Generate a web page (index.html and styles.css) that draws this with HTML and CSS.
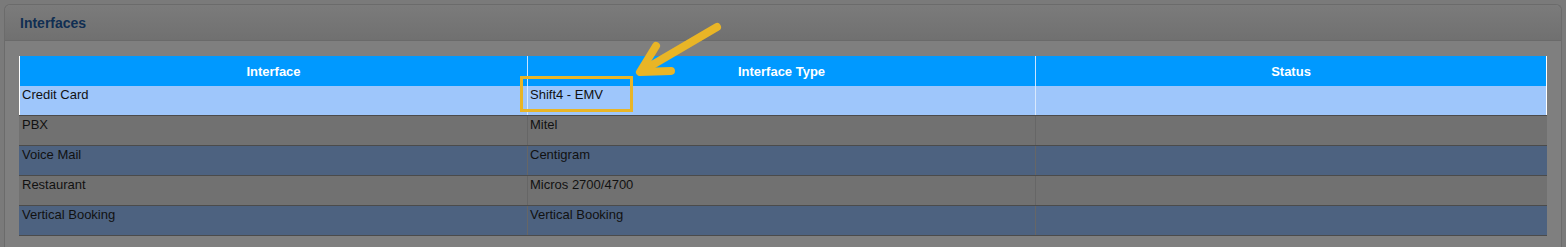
FILE: index.html
```html
<!DOCTYPE html>
<html lang="en">
<head>
    <meta charset="UTF-8">
    <title>Interfaces</title>
    <link rel="stylesheet" href="styles.css">
</head>
<body>
    <div class="panel">
        <div class="panel-head">
            <h2>Interfaces</h2>
        </div>
        <div class="panel-body">
            <table class="grid">
                <colgroup>
                    <col class="col-name">
                    <col class="col-type">
                    <col>
                </colgroup>
                <thead>
                    <tr>
                        <th>Interface</th>
                        <th>Interface Type</th>
                        <th>Status</th>
                    </tr>
                </thead>
                <tbody>
                    <tr class="selected">
                        <td>Credit Card</td>
                        <td>Shift4 - EMV</td>
                        <td></td>
                    </tr>
                    <tr>
                        <td>PBX</td>
                        <td>Mitel</td>
                        <td></td>
                    </tr>
                    <tr class="alt">
                        <td>Voice Mail</td>
                        <td>Centigram</td>
                        <td></td>
                    </tr>
                    <tr>
                        <td>Restaurant</td>
                        <td>Micros 2700/4700</td>
                        <td></td>
                    </tr>
                    <tr class="alt">
                        <td>Vertical Booking</td>
                        <td>Vertical Booking</td>
                        <td></td>
                    </tr>
                </tbody>
            </table>
        </div>
    </div>

    <!-- callout marking the EMV interface type -->
    <svg class="callout" width="1566" height="247" viewBox="0 0 1566 247">
        <rect x="521.5" y="77.5" width="110" height="33" fill="none" stroke="#e9b526" stroke-width="3"/>
        <g fill="none" stroke="#e9b526" stroke-width="8" stroke-linecap="round" stroke-linejoin="round">
            <line x1="717" y1="27" x2="642" y2="71"/>
            <polyline points="656,46 640,72 671,71"/>
        </g>
    </svg>
</body>
</html>
```

FILE: styles.css
```css
* {
    margin: 0;
    padding: 0;
    box-sizing: border-box;
}

body {
    font-family: "Liberation Sans", Arial, sans-serif;
    font-size: 13px;
    background-color: #7a7a7a;
    width: 1566px;
    height: 247px;
    overflow: hidden;
    padding: 4px 4px 0 4px;
}

.panel {
    background-color: #7f7f7f;
    border: 1px solid #6b6b6b;
    border-bottom: none;
    border-radius: 6px 6px 0 0;
    height: 243px;
}

.panel-head {
    height: 36px;
    background: linear-gradient(#7b7b7b, #707070);
    border-bottom: 1px solid #6a6a6a;
    border-radius: 6px 6px 0 0;
    padding: 10px 15px 0;
}

.panel-head h2 {
    font-size: 14px;
    font-weight: bold;
    color: #102e52;
}

.panel-body {
    padding: 15px 14px 0 14px;
}

.grid {
    width: 1528px;
    border-collapse: collapse;
    table-layout: fixed;
}

.col-name,
.col-type {
    width: 508px;
}

.grid th {
    background-color: #0099ff;
    color: #ffffff;
    font-weight: bold;
    height: 30px;
    text-align: center;
    border-left: 1px solid #c8e4ff;
}

.grid th:first-child {
    border-left: 1px solid #ffffff;
}

.grid th:last-child {
    border-right: 1px solid #ffffff;
}

.grid td {
    height: 30px;
    vertical-align: top;
    padding: 1px 2px 0 2px;
    color: #111111;
    background-color: #717171;
    border-bottom: 1px solid #4b4b4b;
    border-left: 1px solid #666666;
}

.grid tr.alt td {
    background-color: #4d6280;
}

.grid tr.selected td {
    height: 29px;
    background-color: #9ec6fb;
    border-left-color: #d8e8fc;
}

.grid tr.selected td:first-child {
    border-left-color: #ffffff;
}

.grid tr.selected td:last-child {
    border-right: 1px solid #ffffff;
}

.grid td:first-child {
    border-left: 1px solid #717171;
    padding-left: 2px;
}

.grid tr.alt td:first-child {
    border-left-color: #4d6280;
}

.callout {
    position: absolute;
    left: 0;
    top: 0;
    pointer-events: none;
}
```
